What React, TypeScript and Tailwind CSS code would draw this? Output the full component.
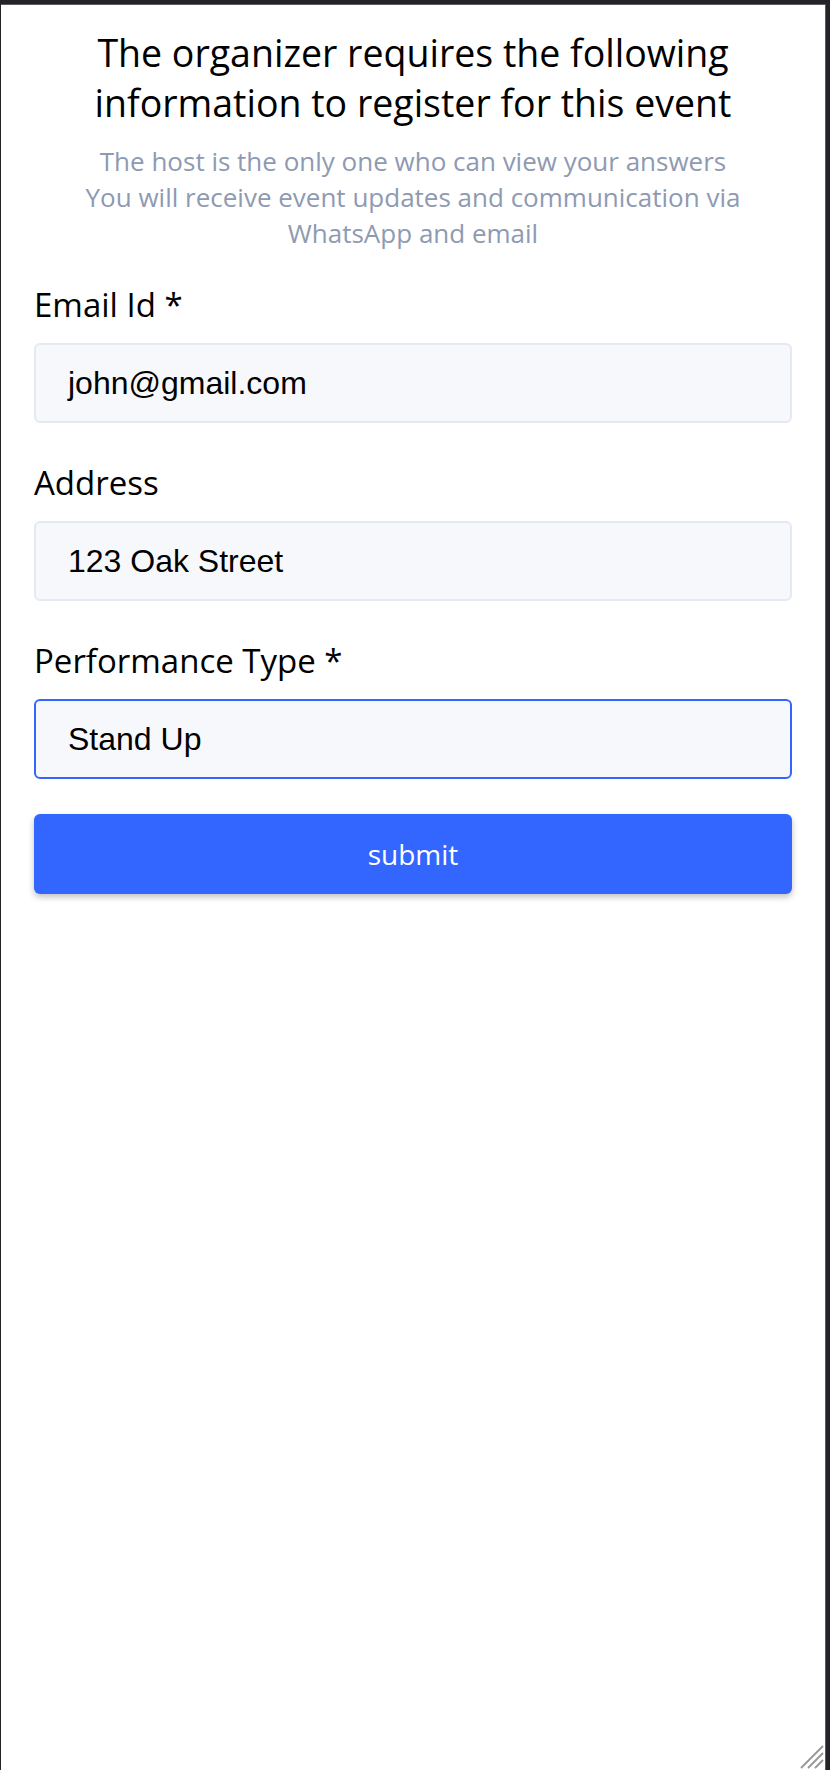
import React from "react";

const fields = [
  { label: "Email Id *", value: "john@gmail.com", focused: false },
  { label: "Address", value: "123 Oak Street", focused: false },
  { label: "Performance Type *", value: "Stand Up", focused: true },
];

const App = () => {
  return (
    <div className="min-h-screen h-[1770px] bg-[#242428] pt-[4px] pl-[1px] pr-[4px] flex">
      <div className="relative flex-1 bg-white border-r border-t border-[#5c5c60] px-[33px] pt-[23px] font-['Open_Sans',sans-serif]">
        {/* Header */}
        <h1 className="text-center text-[37.5px] leading-[50px] font-medium text-black">
          The organizer requires the following
          <br />
          information to register for this event
        </h1>
        <p className="mt-[15px] text-center text-[26px] leading-[36px] text-[#8e9ab2]">
          The host is the only one who can view your answers
          <br />
          You will receive event updates and communication via
          <br />
          WhatsApp and email
        </p>

        {/* Form */}
        <div className="mt-[34px]">
          {fields.map((f) => (
            <div key={f.label} className="mb-[40px]">
              <label className="block text-[33px] leading-[40px] font-medium text-black">
                {f.label}
              </label>
              <div
                className={
                  f.focused
                    ? "mt-[18px] h-[80px] flex items-center rounded-[6px] border-2 border-[#3366ff] bg-[#f7f8fb] pl-[32px] text-[32px] text-black font-['Liberation_Sans',Arial,sans-serif]"
                    : "mt-[18px] h-[80px] flex items-center rounded-[6px] border-2 border-[#e4e9f2] bg-[#f7f8fb] pl-[32px] text-[32px] text-black font-['Liberation_Sans',Arial,sans-serif]"
                }
              >
                {f.value}
              </div>
            </div>
          ))}
          <button className="-mt-[5px] w-full h-[80px] rounded-[6px] bg-[#3366ff] text-white text-[28px] shadow-[0_3px_6px_rgba(0,0,0,0.25)]">
            submit
          </button>
        </div>

        {/* resize grip */}
        <svg
          className="absolute right-[1px] bottom-[1px]"
          width="26"
          height="26"
          viewBox="0 0 26 26"
        >
          <path d="M25 3 L3 25 M25 10 L10 25 M25 17 L17 25" stroke="#9a9a9a" strokeWidth="2" />
        </svg>
      </div>
    </div>
  );
};

export default App;
